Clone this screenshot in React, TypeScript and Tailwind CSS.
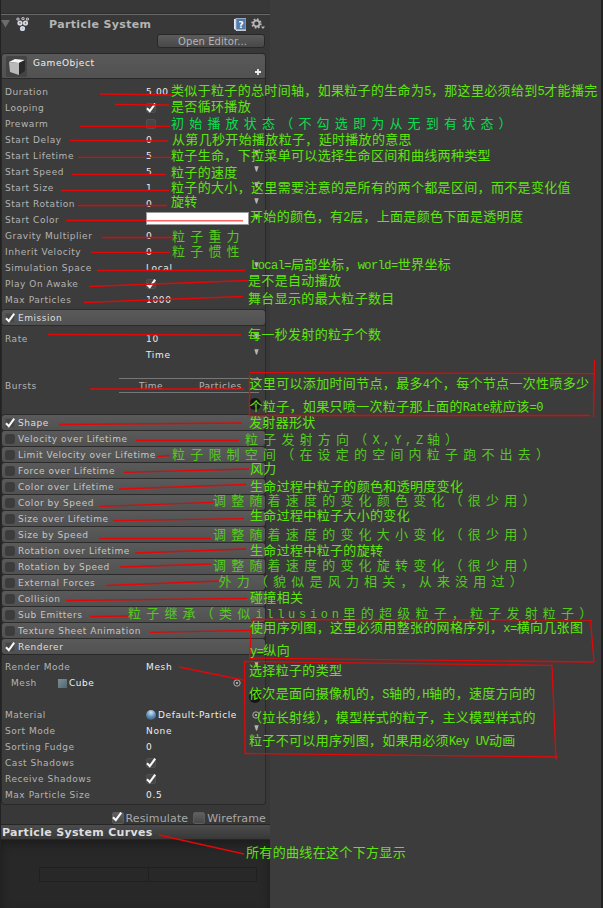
import React from "react";

const Check = ({ on, light }: { on?: boolean; light?: boolean }) => (
  <span className={`relative block shrink-0 rounded-[2px] ${light ? "size-[12px] border border-[#5c5c5c] bg-gradient-to-b from-[#606060] to-[#484848]" : "size-[10px] border border-[#505050] bg-[#464646]"}`}>
    {on && (
      <svg className="absolute -left-px -top-[2px] overflow-visible" width="11" height="11" viewBox="0 0 11 11">
        <path d="M1 6.2 L3.8 9.2 L9.2 1.6" fill="none" stroke="#f8f8f8" strokeWidth="2.1" />
      </svg>
    )}
  </span>
);

const Arrow = () => (
  <svg width="5" height="6" viewBox="0 0 5 6" className="shrink-0">
    <path d="M0.3 0.3 H4.7 L3 5.5 H2 Z" fill="#b4b4b4" />
  </svg>
);

const Plus = () => (
  <span className="flex size-[12px] items-center justify-center rounded-full bg-[#151515]">
    <svg width="6" height="6" viewBox="0 0 6 6"><path d="M3 0V6M0 3H6" stroke="#444" strokeWidth="1" /></svg>
  </span>
);

const Row = ({ label, children, arrow }: { label?: string; children?: React.ReactNode; arrow?: boolean }) => (
  <div className="flex h-4 items-center pl-[3px] pr-[6px]">
    <span className="w-[141px] shrink-0 text-[#b4b4b4]">{label}</span>
    <span className="flex flex-1 items-center tracking-[0.65px] text-[#ececec]">{children}</span>
    {arrow && <span className="-mt-[6px]"><Arrow /></span>}
  </div>
);

const Header = ({ label, on }: { label: string; on?: boolean }) => (
  <div className="mb-px flex h-[15px] shrink-0 items-center gap-[3px] rounded-[3px] bg-gradient-to-b from-[#5a5a5a] to-[#515151] pl-[3px] shadow-[0_0_0_1px_#2b2b2b]">
    {on ? <span className="rounded-[3px] bg-[#3c3c3c]"><Check on /></span> : <span className="size-[10px] rounded-[3px] bg-[#3c3c3c]" />}
    <span className={on ? "pt-px text-[#dedede]" : "pt-px text-[#c6c6c6]"}>{label}</span>
  </div>
);

const Target = () => (
  <svg width="8" height="8" viewBox="0 0 8 8" className="shrink-0">
    <circle cx="4" cy="4" r="3.2" fill="none" stroke="#b8b8b8" strokeWidth=".9" />
    <circle cx="4" cy="4" r="1" fill="#c8c8c8" />
  </svg>
);

const modules = [
  "Velocity over Lifetime", "Limit Velocity over Lifetime", "Force over Lifetime", "Color over Lifetime",
  "Color by Speed", "Size over Lifetime", "Size by Speed", "Rotation over Lifetime", "Rotation by Speed",
  "External Forces", "Collision", "Sub Emitters", "Texture Sheet Animation",
];

type Note = { x: number; y: number; t: string; wide?: boolean; cyan?: boolean };
const notes: Note[] = [
  { x: 171, y: 91, t: "类似于粒子的总时间轴，如果粒子的生命为5，那这里必须给到5才能播完" },
  { x: 171, y: 107, t: "是否循环播放" },
  { x: 171, y: 124, t: "初始播放状态（不勾选即为从无到有状态）", wide: true, cyan: true },
  { x: 172, y: 140, t: "从第几秒开始播放粒子，延时播放的意思" },
  { x: 171, y: 156, t: "粒子生命，下拉菜单可以选择生命区间和曲线两种类型" },
  { x: 171, y: 172.5, t: "粒子的速度" },
  { x: 171, y: 187.5, t: "粒子的大小，这里需要注意的是所有的两个都是区间，而不是变化值" },
  { x: 171, y: 201.5, t: "旋转" },
  { x: 250, y: 216.5, t: "开始的颜色，有2层，上面是颜色下面是透明度" },
  { x: 172, y: 236.5, t: "粒子重力", wide: true },
  { x: 172, y: 252, t: "粒子惯性", wide: true },
  { x: 251, y: 264.5, t: "Local=局部坐标，world=世界坐标" },
  { x: 248, y: 280.5, t: "是不是自动播放" },
  { x: 248, y: 298.5, t: "舞台显示的最大粒子数目" },
  { x: 248, y: 334.5, t: "每一秒发射的粒子个数" },
  { x: 249.5, y: 383.5, t: "这里可以添加时间节点，最多4个，每个节点一次性喷多少" },
  { x: 249.5, y: 406.5, t: "个粒子，如果只喷一次粒子那上面的Rate就应该=0" },
  { x: 249, y: 422.5, t: "发射器形状" },
  { x: 245, y: 439.5, t: "粒子发射方向（X,Y,Z轴）", wide: true },
  { x: 172, y: 455, t: "粒子限制空间（在设定的空间内粒子跑不出去）", wide: true },
  { x: 250, y: 469, t: "风力" },
  { x: 250, y: 486.5, t: "生命过程中粒子的颜色和透明度变化" },
  { x: 213, y: 501, t: "调整随着速度的变化颜色变化（很少用）", wide: true },
  { x: 250, y: 515.5, t: "生命过程中粒子大小的变化" },
  { x: 213, y: 535, t: "调整随着速度的变化大小变化（很少用）", wide: true },
  { x: 250, y: 550.5, t: "生命过程中粒子的旋转" },
  { x: 213, y: 566, t: "调整随着速度的变化旋转变化（很少用）", wide: true },
  { x: 218.5, y: 582, t: "外力（貌似是风力相关，从来没用过）", wide: true },
  { x: 250, y: 598, t: "碰撞相关" },
  { x: 128, y: 614, t: "粒子继承（类似illusion里的超级粒子，粒子发射粒子）", wide: true },
  { x: 250, y: 627.5, t: "使用序列图，这里必须用整张的网格序列，x=横向几张图" },
  { x: 250, y: 650.5, t: "y=纵向" },
  { x: 249, y: 670.5, t: "选择粒子的类型" },
  { x: 249, y: 693.5, t: "依次是面向摄像机的，S轴的,H轴的，速度方向的" },
  { x: 249, y: 717.5, t: "（拉长射线），模型样式的粒子，主义模型样式的" },
  { x: 249, y: 740.5, t: "粒子不可以用序列图，如果用必须Key UV动画" },
  { x: 246, y: 852.5, t: "所有的曲线在这个下方显示" },
];

const strokes = [
  "M100 94L173 95", "M115 104.5L169 105", "M80 126.3H170", "M70 140.5L168 141", "M78 157.3H171", "M72 174.5H166",
  "M61 190.5H169", "M78 205.5H167", "M66 220.5H146", "M102 237.5H173", "M91 252.3H170", "M97 270.5H245",
  "M89 286.5L248 280.5", "M84 302.5L243 296.5", "M48 334.5L241 335", "M90 389H244", "M59 424.5L242 423",
  "M136 440.5H239", "M157 456.5L170 455.5", "M124 472.3L249 469", "M119 489L246 484.5", "M100 506.3L213 502.3",
  "M113 520.6L244 518.6", "M99 538.5H211", "M135 553L246 549", "M120 567L211 564", "M106 585.5L220 581",
  "M66 600.5L247 598.3", "M90 616.5L129 616", "M150 632.3L251 630.3", "M179 667L243 680", "M159 835L244 854",
  "M249 372.6L594 373.6", "M249.5 375V415.5", "M249 415.5H590", "M594.5 360L593.5 417",
  "M251 619.5L592 620", "M590.5 620L594 662", "M594 662L249 658", "M252 619L249.5 658",
  "M244 661.5L552 665.3L556 760", "M245 753.5L558 757", "M244.5 661L245 754",
];

const NoteText = ({ n }: { n: Note }) => (
  <div
    className={`absolute -translate-y-1/2 whitespace-pre leading-4 ${n.wide ? "text-[13px] tracking-[5.2px]" : "text-[13px] tracking-[0.33px]"} ${n.cyan ? "text-[#0bdc4e]" : n.wide ? "text-[#55c91f]" : "text-[#5ee60c]"}`}
    style={{ left: n.x, top: n.y }}
  >
    {n.t.split(/([\x20-\x7e]+)/).map((s, i) =>
      i % 2 ? (
        <span key={i} className={`font-["Liberation_Mono",monospace] text-[12px] ${n.wide ? "tracking-[3.7px]" : "tracking-[-0.53px]"}`}>{s}</span>
      ) : s
    )}
  </div>
);

export default function App() {
  return (
    <div className='relative h-[908px] w-[603px] overflow-hidden bg-[#3c3c3c] font-["DejaVu_Sans","Noto_Sans_CJK_SC",sans-serif] text-[9px] leading-4 tracking-[0.54px]'>
      <div className="flex h-full">
        <div className="flex w-[270px] flex-col border-l border-[#222] bg-[#383838]">
          <div className="h-[14px] border-b border-[#2e2e2e]" />
          <div className="flex h-[19px] items-center border-t border-[#686868] pr-[5px]">
            <svg width="9" height="8" viewBox="0 0 9 8"><path d="M0 0H9L4.5 7.5Z" fill="#6c6c6c" /></svg>
            <svg className="ml-[6px]" width="14" height="15" viewBox="0 0 14 15">
              {[[2, 2], [7, 1.6], [11.5, 2], [4, 6], [9.5, 6], [6.5, 11.5]].map(([x, y], i) => (
                <g key={i}>
                  <circle cx={x} cy={y} r={i > 2 ? 2.6 : 1.6} fill="#d8d8e0" />
                  <circle cx={x} cy={y} r=".8" fill={i === 5 ? "#8cc8e8" : "#5c5060"} />
                </g>
              ))}
            </svg>
            <span className="ml-[19px] flex-1 pt-[2px] text-[11px] font-bold tracking-[0.36px] text-[#b4b4b4]">Particle System</span>
            <svg width="12" height="13" viewBox="0 0 12 13">
              <path d="M0 1H3V13L0 11Z" fill="#e4eaf2" />
              <rect x="2" y="0.5" width="10" height="11" fill="#5579a8" stroke="#a3bbd8" strokeWidth=".8" />
              <path d="M2 12.4H12" stroke="#ddd" />
              <text x="4.6" y="9.6" fontSize="9" fontWeight="bold" fill="#fff" letterSpacing="0">?</text>
            </svg>
            <svg className="ml-[5px]" width="14" height="12" viewBox="0 0 14 12">
              <circle cx="5.5" cy="5.5" r="3" fill="none" stroke="#b6b6b6" strokeWidth="1.8" />
              <circle cx="5.5" cy="5.5" r="4.4" fill="none" stroke="#b6b6b6" strokeWidth="1.6" strokeDasharray="1.7 1.75" />
              <path d="M10 8.5H14L12 11Z" fill="#b6b6b6" />
            </svg>
          </div>
          <div className="mt-px flex h-[20px] justify-end pr-[5px]">
            <div className="h-[14px] w-[108px] rounded-[3px] border border-[#282828] bg-gradient-to-b from-[#5c5c5c] to-[#484848] pl-[3px] text-center text-[10px] leading-[14px] tracking-[0.05px] text-[#b4b4b4]">Open Editor...</div>
          </div>
          <div className="ml-px mr-[5px] flex h-[25px] rounded-[3px] bg-gradient-to-b from-[#595959] to-[#515151] pl-[4px] shadow-[0_0_0_1px_#292929]">
            <div className="mt-[2px] flex size-[21px] items-center justify-center rounded-[2px] bg-[#444]">
              <svg width="18" height="18" viewBox="0 0 18 18">
                <path d="M1 4L7 1L17 2L11 5Z" fill="#f4f4f4" />
                <path d="M1 4L11 5V17L2 14Z" fill="#b9b9b9" />
                <path d="M11 5L17 2V13L11 17Z" fill="#292929" />
              </svg>
            </div>
            <span className="ml-[6px] flex-1 pt-px text-[#eee]">GameObject</span>
            <svg className="mr-[4px] mt-[15px]" width="6" height="6" viewBox="0 0 6 6"><path d="M3 0V6M0 3H6" stroke="#eee" strokeWidth="1.8" /></svg>
          </div>
          <div className="ml-px mr-[5px] flex h-[576px] flex-col shadow-[0_0_0_1px_#292929]">
            <div className="h-[231px] shrink-0 bg-[#3c3c3c] pt-[5px]">
              <Row label="Duration">5.00</Row>
              <Row label="Looping"><Check on /></Row>
              <Row label="Prewarm"><Check /></Row>
              <Row label="Start Delay">0</Row>
              <Row label="Start Lifetime" arrow>5</Row>
              <Row label="Start Speed" arrow>5</Row>
              <Row label="Start Size" arrow>1</Row>
              <Row label="Start Rotation" arrow>0</Row>
              <Row label="Start Color" arrow>
                <span className="-mr-[4px] -mt-[4px] h-[13px] w-[103px] shrink-0 border border-[#999] bg-white" />
              </Row>
              <Row label="Gravity Multiplier">0</Row>
              <Row label="Inherit Velocity">0</Row>
              <Row label="Simulation Space" arrow>Local</Row>
              <Row label="Play On Awake"><Check on /></Row>
              <Row label="Max Particles">1000</Row>
            </div>
            <Header label="Emission" on />
            <div className="h-[89px] shrink-0 bg-[#3c3c3c] pt-[5px]">
              <Row label="Rate" arrow>10</Row>
              <Row arrow>Time</Row>
              <div className="flex h-[35px] pt-[15px]">
                <span className="w-[117px] pl-[3px] text-[#b4b4b4]">Bursts</span>
                <div className="flex h-[15px] w-[140px] border-y border-[#777] pl-[20px] leading-[14px] text-[#b4b4b4]">
                  <span className="w-[60px]">Time</span><span>Particles</span>
                </div>
              </div>
              <div className="flex justify-end pr-[4px]"><Plus /></div>
            </div>
            <Header label="Shape" on />
            {modules.map((m) => <Header key={m} label={m} />)}
            <Header label="Renderer" on />
          </div>
          <div className="ml-px mr-[5px] h-[149px] rounded-b-[3px] bg-[#3c3c3c] pt-[4px] shadow-[0_0_0_1px_#292929]">
            <Row label="Render Mode" arrow>Mesh</Row>
            <div className="flex h-4 items-center pl-[9px] pr-[24px]">
              <span className="w-[47px] text-[#b4b4b4]">Mesh</span>
              <span className="mr-[2px] size-[9px] bg-gradient-to-br from-[#7b919a] to-[#52656e]" />
              <span className="flex-1 text-[#eee]">Cube</span><Target />
            </div>
            <div className="flex h-4 justify-end pr-[4px]"><Plus /></div>
            <div className="flex h-4 items-center pl-[3px] pr-[5px]">
              <span className="w-[141px] text-[#b4b4b4]">Material</span>
              <span className="mr-[2px] size-[10px] rounded-full bg-[radial-gradient(circle_at_50%_25%,#d0e4f2,#5e8db5_50%,#284964)]" />
              <span className="flex-1 tracking-[0.6px] text-[#eee]">Default-Particle</span><Target />
            </div>
            <Row label="Sort Mode" arrow>None</Row>
            <Row label="Sorting Fudge">0</Row>
            <Row label="Cast Shadows"><Check on /></Row>
            <Row label="Receive Shadows"><Check on /></Row>
            <Row label="Max Particle Size">0.5</Row>
          </div>
          <div className="flex h-[20px] items-center justify-end pr-[4px] pt-[8px] text-[11px] tracking-[0.15px] text-[#a8a8a8]">
            <Check on light /><span className="ml-[2px] mr-[5px] pt-px">Resimulate</span>
            <Check light /><span className="ml-[2px] pt-px">Wireframe</span>
          </div>
          <div className="h-[16px] border-y border-[#262626] bg-gradient-to-b from-[#4c4c4c] to-[#383838] pl-px text-[11px] font-bold leading-[15px] tracking-[0.33px] text-[#dedede]">Particle System Curves</div>
          <div className="flex-1 bg-[#282828] pl-[38px] pt-[27px] shadow-[inset_0_4px_8px_#1c1c1c]">
            <div className="flex h-[15px] w-[218px] border border-[#202020]"><div className="w-[109px] border-r border-[#202020]" /></div>
          </div>
        </div>
        <div className="flex-1 border-r-2 border-[#222]" />
      </div>
      <svg className="absolute inset-0" width="603" height="908" viewBox="0 0 603 908">
        {strokes.map((d) => <path key={d} d={d} fill="none" stroke="#e30808" strokeWidth="1.3" />)}
        <path d="M146 220.7H243" stroke="#ff6464" strokeWidth="1.6" />
      </svg>
      {notes.map((n) => <NoteText key={n.t} n={n} />)}
    </div>
  );
}
